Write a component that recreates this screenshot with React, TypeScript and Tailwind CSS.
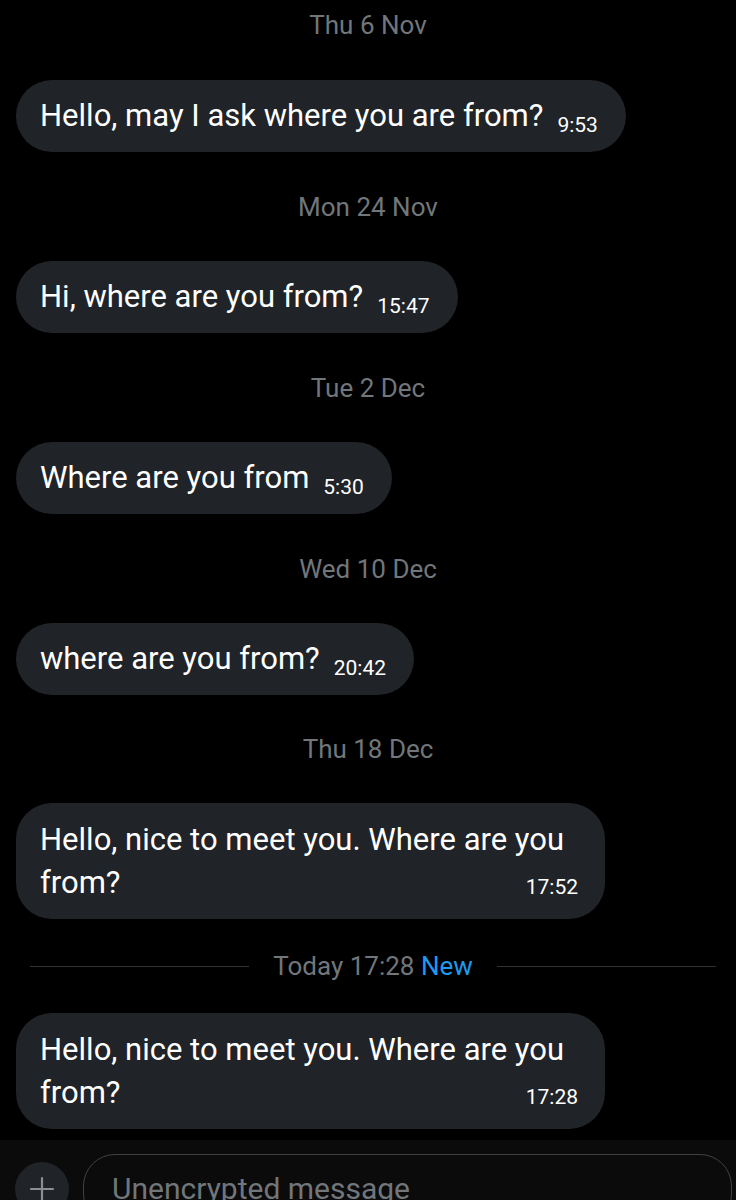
import React from "react";

const font = { fontFamily: "Roboto, 'Noto Sans', sans-serif" };

function DateLabel({ text }: { text: string }) {
  return (
    <div className="h-[50px] flex items-center justify-center text-[26px] text-[#71767b]">
      {text}
    </div>
  );
}

function Bubble({ text, time }: { text: string; time: string }) {
  return (
    <div className="flex">
      <div className="h-[72px] rounded-[36px] bg-[#202327] pl-6 pr-7 flex items-baseline pt-[15px] text-white">
        <span className="text-[31px] leading-[42px]">{text}</span>
        <span className="text-[21px] ml-[14px] leading-none translate-y-[6px]">{time}</span>
      </div>
    </div>
  );
}

function LongBubble({ time }: { time: string }) {
  return (
    <div className="flex">
      <div className="w-[589px] rounded-[36px] bg-[#202327] pl-6 pr-[27px] py-[15px] text-white">
        <div className="text-[31px] leading-[43px] whitespace-nowrap">Hello, nice to meet you. Where are you</div>
        <div className="flex justify-between items-end">
          <span className="text-[31px] leading-[43px]">from?</span>
          <span className="text-[21px] leading-none mb-[6px]">{time}</span>
        </div>
      </div>
    </div>
  );
}

export default function App() {
  return (
    <div className="w-[736px] h-[1200px] bg-black overflow-hidden flex flex-col" style={font}>
      <div className="flex-1 px-4 flex flex-col">
        <DateLabel text="Thu 6 Nov" />
        <div className="mt-[30px]"><Bubble text="Hello, may I ask where you are from?" time="9:53" /></div>
        <div className="mt-[30px]"><DateLabel text="Mon 24 Nov" /></div>
        <div className="mt-[29px]"><Bubble text="Hi, where are you from?" time="15:47" /></div>
        <div className="mt-[30px]"><DateLabel text="Tue 2 Dec" /></div>
        <div className="mt-[29px]"><Bubble text="Where are you from" time="5:30" /></div>
        <div className="mt-[30px]"><DateLabel text="Wed 10 Dec" /></div>
        <div className="mt-[29px]"><Bubble text="where are you from?" time="20:42" /></div>
        <div className="mt-[29px]"><DateLabel text="Thu 18 Dec" /></div>
        <div className="mt-[29px]"><LongBubble time="17:52" /></div>
        <div className="mt-[22px] h-[50px] flex items-center pl-[14px] pr-1 gap-6">
          <div className="flex-1 h-px bg-[#2f3336]" />
          <div className="text-[26px] text-[#71767b]">
            Today 17:28 <span className="text-[#1d9bf0]">New</span>
          </div>
          <div className="flex-1 h-px bg-[#2f3336]" />
        </div>
        <div className="mt-[22px]"><LongBubble time="17:28" /></div>
      </div>
      <div className="h-[60px] bg-[#0b0b0b] flex items-start pt-[14px] pl-[15px] pr-1 gap-[14px]">
        <div className="w-[54px] h-[54px] mt-[8px] rounded-full bg-[#202327] flex items-center justify-center shrink-0">
          <svg width="26" height="26" viewBox="0 0 26 26" fill="none" stroke="#8b8f93" strokeWidth="2.2" strokeLinecap="round">
            <path d="M13 2v22M2 13h22" />
          </svg>
        </div>
        <div className="flex-1 h-[72px] rounded-[32px] border border-[#3e4144] pl-7 pt-[16px] text-[30px] leading-[36px] text-[#71767b] whitespace-nowrap">
          Unencrypted message
        </div>
      </div>
    </div>
  );
}
